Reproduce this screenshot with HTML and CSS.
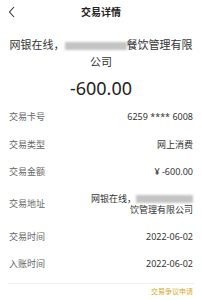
FILE: index.html
```html
<!DOCTYPE html>
<html lang="zh">
<head>
<meta charset="utf-8">
<link rel="stylesheet" href="styles.css">
</head>
<body>
<div class="page">
  <header class="header">
    <svg class="back" width="8" height="12" viewBox="0 0 8 12"><path d="M6 1 L1.5 6 L6 11" fill="none" stroke="#333" stroke-width="1.1"/></svg>
    <div class="title">交易详情</div>
  </header>
  <div class="merchant">网银在线，<span class="blur b1"></span>餐饮管理有限公司</div>
  <div class="amount">-600.00</div>
  <div class="rows">
    <div class="row"><span class="label">交易卡号</span><span class="value">6259 **** 6008</span></div>
    <div class="row"><span class="label">交易类型</span><span class="value">网上消费</span></div>
    <div class="row"><span class="label">交易金额</span><span class="value">¥ -600.00</span></div>
    <div class="row"><span class="label">交易地址</span><span class="value multi"><span class="line">网银在线，<span class="blur b2"></span></span><span class="line">饮管理有限公司</span></span></div>
    <div class="row"><span class="label">交易时间</span><span class="value">2022-06-02</span></div>
    <div class="row"><span class="label">入账时间</span><span class="value">2022-06-02</span></div>
  </div>
  <div class="footer"><span class="link">交易争议申请</span></div>
</div>
</body>
</html>
```
FILE: styles.css
```css
html, body {
  margin: 0;
  padding: 0;
  background: #fff;
}
body {
  font-family: "Noto Sans", "Noto Sans CJK SC", sans-serif;
  color: #333;
}
.page {
  width: 202px;
  height: 300px;
  overflow: hidden;
}
.header {
  position: relative;
  height: 24px;
  display: flex;
  align-items: center;
  justify-content: center;
}
.back {
  position: absolute;
  left: 8px;
  top: 6px;
}
.title {
  font-size: 10px;
  font-weight: bold;
  color: #222;
  line-height: 24px;
}
.merchant {
  margin-top: 12px;
  padding: 0 7px;
  text-align: center;
  font-size: 11px;
  line-height: 17px;
  color: #333;
}
.blur {
  display: inline-block;
  height: 8px;
  background: #c4c4c4;
  filter: blur(1.3px);
  vertical-align: -1px;
}
.b1 { width: 62px; }
.b2 { width: 57px; }
.amount {
  margin-top: 6px;
  text-align: center;
  font-size: 18px;
  line-height: 24px;
  color: #222;
}
.rows {
  margin-top: 3px;
  padding: 0 9px;
}
.row {
  display: flex;
  justify-content: space-between;
  align-items: center;
  padding: 7px 0;
  font-size: 9px;
  line-height: 13.5px;
}
.label {
  color: #666;
}
.value {
  color: #333;
  text-align: right;
}
.multi {
  display: flex;
  flex-direction: column;
  align-items: flex-end;
  line-height: 11.5px;
}
.footer {
  margin: 5px 8px 0;
  border-top: 1px solid #f0f0f0;
  display: flex;
  justify-content: flex-end;
  padding-top: 2px;
}
.link {
  font-size: 7px;
  line-height: 12px;
  color: #d9a82a;
  margin-right: 1px;
}
```
